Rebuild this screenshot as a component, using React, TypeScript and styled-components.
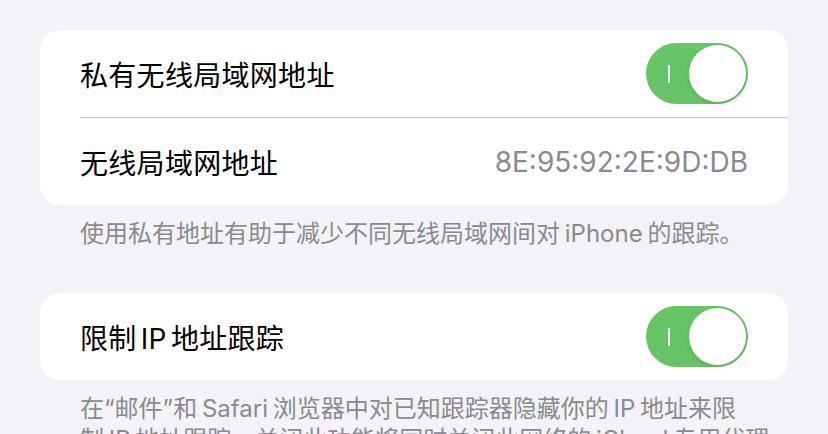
import styled, { createGlobalStyle } from "styled-components";

const GlobalStyle = createGlobalStyle`
  html, body {
    margin: 0;
    padding: 0;
    background: #f2f2f7;
  }
  body {
    font-family: Inter, "Noto Sans CJK SC", sans-serif;
    -webkit-font-smoothing: antialiased;
  }
`;

const Page = styled.div`
  height: 434px;
  overflow: hidden;
  padding: 30px 40px 0;
  box-sizing: border-box;
`;

const Group = styled.div`
  background: #ffffff;
  border-radius: 20px;
  overflow: hidden;
`;

const Row = styled.div`
  height: 87px;
  margin-left: 40px;
  padding-right: 40px;
  display: flex;
  align-items: center;
  justify-content: space-between;
  & + & {
    border-top: 1px solid #c8c8cc;
  }
`;

const Label = styled.span`
  font-size: 28px;
  color: #000000;
  letter-spacing: 0.3px;
  word-spacing: -4px;
`;

const Value = styled.span`
  font-size: 28px;
  color: #8a8a8e;
`;

const Footer = styled.p<{ $gapBelow?: number }>`
  margin: 0 0 ${(p) => p.$gapBelow ?? 0}px;
  padding: 13px 40px 0;
  font-size: 24px;
  line-height: 31px;
  color: #8a8a8e;
  word-spacing: -2px;
  white-space: nowrap;
`;

const Switch = styled.button<{ $on: boolean }>`
  position: relative;
  width: 102px;
  height: 61px;
  padding: 0;
  border: none;
  border-radius: 31px;
  background: ${(p) => (p.$on ? "#65c466" : "#e9e9eb")};
  cursor: pointer;
  flex-shrink: 0;
`;

const Knob = styled.span<{ $on: boolean }>`
  position: absolute;
  top: 2px;
  left: ${(p) => (p.$on ? "43px" : "2px")};
  width: 57px;
  height: 57px;
  border-radius: 50%;
  background: #ffffff;
  box-shadow: 0 2px 4px rgba(0, 0, 0, 0.12);
`;

// accessibility "on" mark shown inside the track
const OnMark = styled.span`
  position: absolute;
  left: 22px;
  top: 22px;
  width: 2px;
  height: 18px;
  border-radius: 1px;
  background: #ffffff;
`;

function Toggle({ on }: { on: boolean }) {
  return (
    <Switch $on={on} aria-pressed={on}>
      {on && <OnMark />}
      <Knob $on={on} />
    </Switch>
  );
}

export default function App() {
  return (
    <>
      <GlobalStyle />
      <Page>
        <Group>
          <Row>
            <Label>私有无线局域网地址</Label>
            <Toggle on />
          </Row>
          <Row>
            <Label>无线局域网地址</Label>
            <Value>8E:95:92:2E:9D:DB</Value>
          </Row>
        </Group>
        <Footer $gapBelow={44}>
          使用私有地址有助于减少不同无线局域网间对 iPhone 的跟踪。
        </Footer>

        <Group>
          <Row>
            <Label>限制 IP 地址跟踪</Label>
            <Toggle on />
          </Row>
        </Group>
        <Footer>
          在“邮件”和 Safari 浏览器中对已知跟踪器隐藏你的 IP 地址来限
          <br />
          制 IP 地址跟踪。关闭此功能将同时关闭此网络的 iCloud 专用代理。
        </Footer>
      </Page>
    </>
  );
}
